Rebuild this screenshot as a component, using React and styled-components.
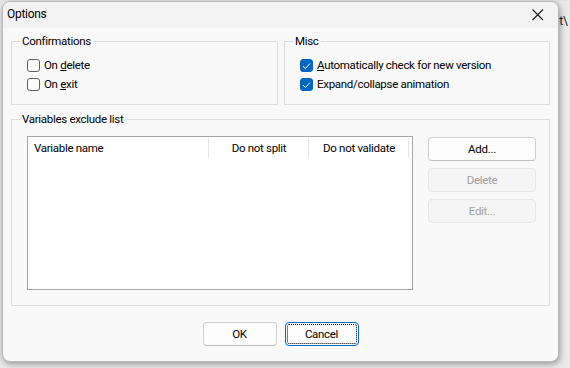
import React from "react";
import styled, { createGlobalStyle } from "styled-components";

const Global = createGlobalStyle`
  html, body { margin: 0; padding: 0; }
  body {
    width: 570px;
    height: 368px;
    overflow: hidden;
    background: #e4e4e4;
    font-family: "Segoe UI", Roboto, "Noto Sans", sans-serif;
    font-size: 11.5px;
    letter-spacing: -0.3px;
    color: #000;
  }
`;

const Desktop = styled.div`
  position: relative;
  width: 570px;
  height: 368px;
  background: #e9e9e9;
`;

const BehindText = styled.span`
  position: absolute;
  left: 553px;
  top: 13px;
  font-size: 12px;
  color: #1a1a1a;
`;

const Window = styled.div`
  position: relative;
  margin: 1px 0 0 2px;
  width: 555px;
  height: 359px;
  border: 1px solid #b8b8b8;
  border-radius: 8px;
  background: #f9f9f9;
  box-shadow: 1px 2px 6px rgba(0, 0, 0, 0.35);
  overflow: hidden;
  display: flex;
  flex-direction: column;
`;

const TitleBar = styled.div`
  height: 26px;
  display: flex;
  align-items: center;
  justify-content: space-between;
  background: #f3f3f3;
  padding-left: 4px;
`;

const Title = styled.span`
  font-size: 12px;
  color: #000;
  padding-bottom: 2px;
`;

const CloseBtn = styled.div`
  width: 46px;
  height: 26px;
  display: flex;
  align-items: center;
  justify-content: center;
  margin-right: -3px;
  padding-bottom: 1px;
`;

const Body = styled.div`
  flex: 1;
  padding: 6px 8px 0 8px;
  display: flex;
  flex-direction: column;
`;

const TopRow = styled.div`
  display: grid;
  grid-template-columns: 267px 266px;
  column-gap: 6px;
`;

const Group = styled.fieldset`
  margin: 0;
  border: 1px solid #dcdcdc;
  padding: ${(p) => p.$pad || "7px 8px 10px 8px"};
  min-width: 0;
  box-sizing: border-box;
  height: ${(p) => p.$h}px;
`;

const Legend = styled.legend`
  padding: 0 2px;
  margin-left: 0;
  line-height: 15px;
`;

const CheckList = styled.div`
  padding-left: 7px;
  display: flex;
  flex-direction: column;
`;

const CheckRow = styled.label`
  height: 19px;
  display: flex;
  align-items: center;
  gap: 4px;
  line-height: 15px;
`;

const Box = styled.span`
  width: 13px;
  height: 13px;
  box-sizing: border-box;
  border-radius: 3px;
  border: 1px solid ${(p) => (p.$checked ? "#0067c0" : "#5f5f5f")};
  background: ${(p) => (p.$checked ? "#0067c0" : "#fdfdfd")};
  display: flex;
  align-items: center;
  justify-content: center;
  flex: none;
`;

const VarGroupWrap = styled.div`
  margin-top: 7px;
`;

const VarContent = styled.div`
  padding-left: 7px;
  display: flex;
  gap: 15px;
`;

const List = styled.div`
  width: 386px;
  height: 154px;
  box-sizing: border-box;
  border: 1px solid #a6a6a6;
  background: #fff;
`;

const Header = styled.div`
  display: grid;
  grid-template-columns: 181px 100px 100px;
  height: 22px;
`;

const HeadCell = styled.div`
  display: flex;
  align-items: center;
  justify-content: ${(p) => (p.$left ? "flex-start" : "center")};
  padding-left: ${(p) => (p.$left ? "6px" : "0")};
  padding-bottom: 1px;
  position: relative;
  &::after {
    content: "";
    position: absolute;
    right: 0;
    top: 1px;
    bottom: 1px;
    width: 1px;
    background: #e5e5e5;
  }
`;

const SideButtons = styled.div`
  margin-top: 1px;
  display: flex;
  flex-direction: column;
  gap: 7px;
`;

const Btn = styled.button`
  box-sizing: border-box;
  width: ${(p) => p.$w}px;
  height: 24px;
  padding: 0 0 1px 0;
  font: inherit;
  letter-spacing: inherit;
  border-radius: 4px;
  background: ${(p) => (p.disabled ? "#f5f5f5" : "#fdfdfd")};
  color: ${(p) => (p.disabled ? "#a0a0a0" : "#000")};
  border: 1px solid ${(p) => (p.$focus ? "#0067c0" : p.disabled ? "#e6e6e6" : "#cfcfcf")};
  border-bottom-color: ${(p) => (p.$focus ? "#0067c0" : p.disabled ? "#e6e6e6" : "#bdbdbd")};
  position: relative;
  display: flex;
  align-items: center;
  justify-content: center;
  ${(p) =>
    p.$focus &&
    `
    &::after {
      content: "";
      position: absolute;
      inset: 1px;
      border: 1px dotted #000;
      border-radius: 2px;
    }
  `}
`;

const Footer = styled.div`
  display: flex;
  justify-content: center;
  gap: 8px;
  margin-top: 16px;
`;

function Check({ checked, children }) {
  return (
    <CheckRow>
      <Box $checked={checked}>
        {checked && (
          <svg width="9" height="8" viewBox="0 0 9 8">
            <path d="M1 4.2 L3.4 6.5 L8 1.5" fill="none" stroke="#fff" strokeWidth="1" />
          </svg>
        )}
      </Box>
      <span>{children}</span>
    </CheckRow>
  );
}

export default function App() {
  return (
    <>
      <Global />
      <Desktop>
        <BehindText>nt\</BehindText>
        <Window>
          <TitleBar>
            <Title>Options</Title>
            <CloseBtn>
              <svg width="12" height="12" viewBox="0 0 12 12">
                <path d="M0.5 0.5 L11 11 M11 0.5 L0.5 11" stroke="#1a1a1a" strokeWidth="1.1" fill="none" />
              </svg>
            </CloseBtn>
          </TitleBar>
          <Body>
            <TopRow>
              <Group $h={71}>
                <Legend>Confirmations</Legend>
                <CheckList>
                  <Check>On <u>d</u>elete</Check>
                  <Check>On <u>e</u>xit</Check>
                </CheckList>
              </Group>
              <Group $h={71}>
                <Legend>Misc</Legend>
                <CheckList>
                  <Check checked><u>A</u>utomatically check for new version</Check>
                  <Check checked>Expand/collapse animation</Check>
                </CheckList>
              </Group>
            </TopRow>
            <VarGroupWrap>
              <Group $h={194} $pad="9px 8px 15px 8px">
                <Legend>Variables exclude list</Legend>
                <VarContent>
                  <List>
                    <Header>
                      <HeadCell $left>Variable name</HeadCell>
                      <HeadCell>Do not split</HeadCell>
                      <HeadCell>Do not validate</HeadCell>
                    </Header>
                  </List>
                  <SideButtons>
                    <Btn $w={108}>Add...</Btn>
                    <Btn $w={108} disabled>Delete</Btn>
                    <Btn $w={108} disabled>Edit...</Btn>
                  </SideButtons>
                </VarContent>
              </Group>
            </VarGroupWrap>
            <Footer>
              <Btn $w={74}>OK</Btn>
              <Btn $w={74} $focus>Cancel</Btn>
            </Footer>
          </Body>
        </Window>
      </Desktop>
    </>
  );
}
